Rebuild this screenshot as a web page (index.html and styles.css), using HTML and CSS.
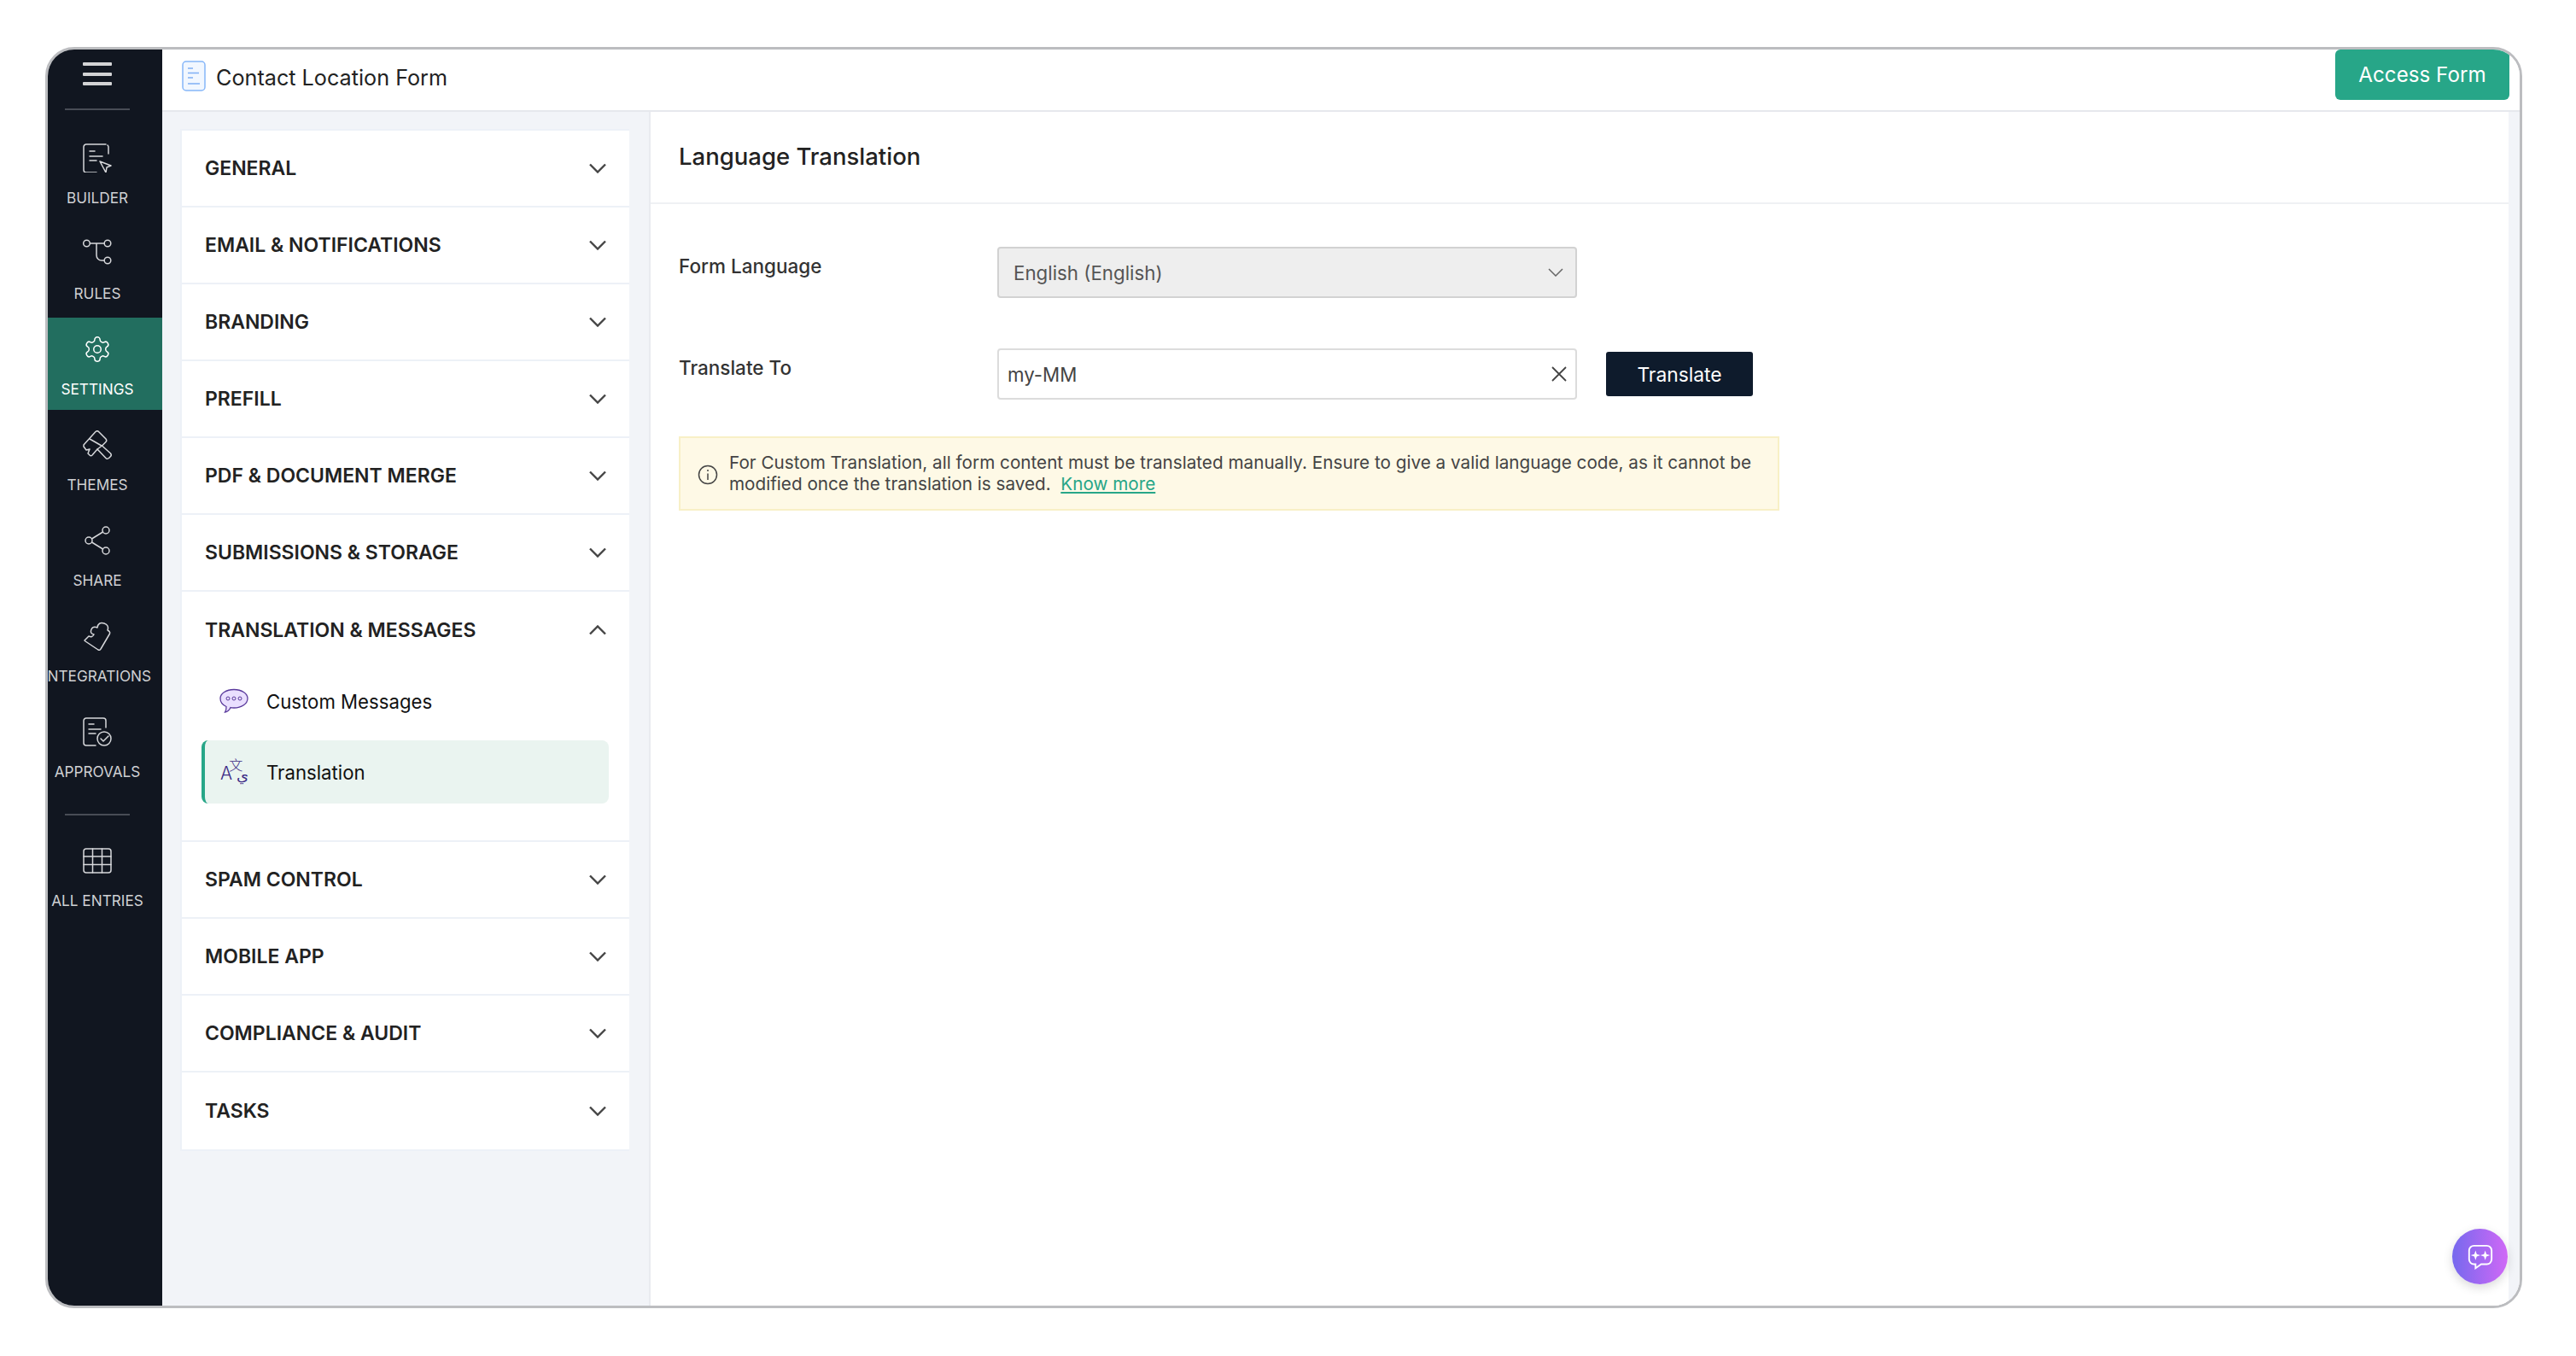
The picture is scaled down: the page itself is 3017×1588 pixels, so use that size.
FILE: index.html
```html
<!DOCTYPE html>
<html lang="en">
<head>
  <meta charset="UTF-8" />
  <title>Contact Location Form - Language Translation</title>
  <link rel="stylesheet" href="styles.css">
</head>
<body>
<div class="frame">

  <!-- left rail -->
  <nav class="rail">
    <div class="rail-top">
      <span class="burger"><i></i><i></i><i></i></span>
    </div>
    <div class="rail-line"></div>

    <a class="rail-item">
      <svg class="rail-icon" viewBox="0 0 34 34"><path d="M30 12V4a3 3 0 0 0-1-2M27 1H4a3 3 0 0 0-3 3v27a3 3 0 0 0 3 3h12"/><path d="M8 9h6M8 15h15M8 20h8"/><path d="M20 21l13 5-5 2-1 6z" /></svg>
      <span>BUILDER</span>
    </a>
    <a class="rail-item">
      <svg class="rail-icon" viewBox="0 0 34 34"><circle cx="4.5" cy="5" r="3.8"/><circle cx="29" cy="5" r="3.8"/><circle cx="29" cy="25" r="3.8"/><path d="M8.5 5h16.500M16 5v14a6 6 0 0 0 6 6h3"/></svg>
      <span>RULES</span>
    </a>
    <a class="rail-item active">
      <svg class="rail-icon" viewBox="0 0 24 24"><path class="thin" d="M12.220 2h-.44a2 2 0 0 0-2 2v.18a2 2 0 0 1-1 1.730l-.43.25a2 2 0 0 1-2 0l-.15-.08a2 2 0 0 0-2.730.73l-.22.38a2 2 0 0 0 .73 2.730l.15.1a2 2 0 0 1 1 1.720v.51a2 2 0 0 1-1 1.740l-.15.09a2 2 0 0 0-.73 2.730l.22.38a2 2 0 0 0 2.730.73l.15-.08a2 2 0 0 1 2 0l.43.25a2 2 0 0 1 1 1.730V20a2 2 0 0 0 2 2h.44a2 2 0 0 0 2-2v-.18a2 2 0 0 1 1-1.730l.43-.25a2 2 0 0 1 2 0l.15.08a2 2 0 0 0 2.730-.73l.22-.39a2 2 0 0 0-.73-2.730l-.15-.08a2 2 0 0 1-1-1.740v-.5a2 2 0 0 1 1-1.740l.15-.09a2 2 0 0 0 .73-2.730l-.22-.38a2 2 0 0 0-2.730-.73l-.15.08a2 2 0 0 1-2 0l-.43-.25a2 2 0 0 1-1-1.730V4a2 2 0 0 0-2-2z"/><circle class="thin" cx="12" cy="12" r="3"/></svg>
      <span>SETTINGS</span>
    </a>
    <a class="rail-item">
      <svg class="rail-icon" viewBox="0 0 34 34"><path d="M1 17L15 1.500q2-1.500 3.500 0L27 10q1.500 2 0 3.500L22.500 18l10 9q1.500 2 0 3.500l-2 2q-2 1.500-3.500 0L17 22l-6 7q-1.500 1.500-3 0l-2-2 2-5-4 1-3-4z"/><path d="M8 10l14 8M17 22l5.500-4"/></svg>
      <span>THEMES</span>
    </a>
    <a class="rail-item">
      <svg class="rail-icon" viewBox="0 0 34 34"><circle cx="27" cy="5" r="4"/><circle cx="7" cy="17" r="4"/><circle cx="27" cy="29" r="4"/><path d="M10.500 15l13-8M10.500 19l13 8"/></svg>
      <span>SHARE</span>
    </a>
    <a class="rail-item">
      <svg class="rail-icon" viewBox="0 0 34 34"><path d="M3 23L18 33q2 1 3-1l10-17q2-3-2-5 2-6-4-8-7-2-8 5-5-2-7 2-2 5 3 6-2 4-6 2-3 3-5 5z"/></svg>
      <span>INTEGRATIONS</span>
    </a>
    <a class="rail-item">
      <svg class="rail-icon" viewBox="0 0 34 34"><path d="M27 12V4a3 3 0 0 0-3-3H4a3 3 0 0 0-3 3v26a3 3 0 0 0 3 3h11"/><path d="M7 8h6M7 14h14M7 19h8"/><circle cx="25" cy="25" r="8"/><path d="M21 25l3 3 6-6"/></svg>
      <span>APPROVALS</span>
    </a>

    <div class="rail-line rail-line-2"></div>

    <a class="rail-item entries">
      <svg class="rail-icon" viewBox="0 0 34 30"><rect x="1" y="1" width="32" height="28" rx="3"/><path d="M1 10h32M1 19.500h32M11.500 1v28M22.500 1v28"/></svg>
      <span>ALL ENTRIES</span>
    </a>
  </nav>

  <div class="workspace">
    <header class="topbar">
      <svg class="form-icon" viewBox="0 0 28 36"><rect x="1" y="1" width="26" height="34" rx="4" fill="#f1f7ff" stroke="#85b6f9" stroke-width="1.500"/><path d="M7 9h6M7 14.500h13M7 20h6M7 27h14" stroke="#7fb0f5" stroke-width="1.500" fill="none"/></svg>
      <span class="form-name">Contact Location Form</span>
      <button class="access-btn">Access Form</button>
    </header>

    <div class="panels">
      <aside class="settings-col">
        <div class="accordion">
          <div class="acc-row"><span>GENERAL</span><svg class="chev" viewBox="0 0 20 12"><path d="M1 1.500l9 9 9-9"/></svg></div>
          <div class="acc-row"><span>EMAIL &amp; NOTIFICATIONS</span><svg class="chev" viewBox="0 0 20 12"><path d="M1 1.500l9 9 9-9"/></svg></div>
          <div class="acc-row"><span>BRANDING</span><svg class="chev" viewBox="0 0 20 12"><path d="M1 1.500l9 9 9-9"/></svg></div>
          <div class="acc-row"><span>PREFILL</span><svg class="chev" viewBox="0 0 20 12"><path d="M1 1.500l9 9 9-9"/></svg></div>
          <div class="acc-row"><span>PDF &amp; DOCUMENT MERGE</span><svg class="chev" viewBox="0 0 20 12"><path d="M1 1.500l9 9 9-9"/></svg></div>
          <div class="acc-row"><span>SUBMISSIONS &amp; STORAGE</span><svg class="chev" viewBox="0 0 20 12"><path d="M1 1.500l9 9 9-9"/></svg></div>

          <div class="acc-group">
            <div class="acc-row open"><span>TRANSLATION &amp; MESSAGES</span><svg class="chev" viewBox="0 0 20 12"><path d="M1 10.500l9-9 9 9"/></svg></div>
            <div class="sub-list">
              <a class="sub-item">
                <svg class="sub-icon" viewBox="0 0 34 30"><path d="M17 1.500c9 0 16 4.500 16 10.500s-7 11-16 11c-1.500 0-3-.1-4-.4-1 2.400-3.500 5-6.500 5.400 1.200-1.800 1.700-4 1.500-6.500C3.500 19.500 1 16 1 12 1 6 8 1.500 17 1.500z" fill="#eadfff" stroke="#5a3a9c" stroke-width="1.300"/><circle cx="10" cy="12" r="2" fill="none" stroke="#5a3a9c"/><circle cx="17" cy="12" r="2" fill="none" stroke="#5a3a9c"/><circle cx="24" cy="12" r="2" fill="none" stroke="#5a3a9c"/></svg>
                <span>Custom Messages</span>
              </a>
              <a class="sub-item current">
                <svg class="sub-icon tr" viewBox="0 0 38 42"><text x="1" y="27" class="tr-a">A</text><text x="12" y="16" class="tr-b">文</text><text x="21" y="28" class="tr-c">ي</text></svg>
                <span>Translation</span>
              </a>
            </div>
          </div>

          <div class="acc-row"><span>SPAM CONTROL</span><svg class="chev" viewBox="0 0 20 12"><path d="M1 1.500l9 9 9-9"/></svg></div>
          <div class="acc-row"><span>MOBILE APP</span><svg class="chev" viewBox="0 0 20 12"><path d="M1 1.500l9 9 9-9"/></svg></div>
          <div class="acc-row"><span>COMPLIANCE &amp; AUDIT</span><svg class="chev" viewBox="0 0 20 12"><path d="M1 1.500l9 9 9-9"/></svg></div>
          <div class="acc-row last"><span>TASKS</span><svg class="chev" viewBox="0 0 20 12"><path d="M1 1.500l9 9 9-9"/></svg></div>
        </div>
      </aside>

      <main class="content">
        <h1 class="content-title">Language Translation</h1>
        <div class="content-body">
          <div class="field">
            <label>Form Language</label>
            <div class="select-box">
              <span>English (English)</span>
              <svg class="select-chev" viewBox="0 0 18 10"><path d="M1 1l8 8 8-8"/></svg>
            </div>
          </div>
          <div class="field field-2">
            <label>Translate To</label>
            <div class="input-box">
              <span>my-MM</span>
              <svg class="clear-x" viewBox="0 0 18 18"><path d="M1 1l16 16M17 1L1 17"/></svg>
            </div>
            <button class="translate-btn">Translate</button>
          </div>
          <div class="notice">
            <svg class="notice-icon" viewBox="0 0 24 24"><circle cx="12" cy="12" r="10.500"/><path d="M12 10.500V18M12 6v2"/></svg>
            <p>For Custom Translation, all form content must be translated manually. Ensure to give a valid language code, as it cannot be modified once the translation is saved.&nbsp; <a>Know more</a></p>
          </div>
        </div>
      </main>
      <div class="edge-strip"></div>
    </div>
  </div>

  <button class="chat-fab">
    <svg viewBox="0 0 34 34"><path d="M9 3h16a6 6 0 0 1 6 6v11a6 6 0 0 1-6 6h-7l-7 5v-5H9a6 6 0 0 1-6-6V9a6 6 0 0 1 6-6z" fill="none" stroke="#fff" stroke-width="2"/><path d="M11 9l1.500 4.500L17 15l-4.500 1.500L11 21l-1.500-4.500L5 15l4.500-1.500zM23 9l1.500 4.500L29 15l-4.500 1.500L23 21l-1.500-4.500L17 15l4.500-1.500z" fill="#fff"/></svg>
  </button>
</div>
</body>
</html>
```

FILE: styles.css
```css
* {
  box-sizing: border-box;
}

html, body {
  margin: 0;
  height: 100%;
  background: #fff;
}

body {
  font-family: "Inter", "Liberation Sans", sans-serif;
  padding: 55px 0 0 53px;
  overflow: hidden;
}

.frame {
  position: relative;
  display: flex;
  width: 2901px;
  height: 1477px;
  border: 3.5px solid #bcbdc0;
  border-radius: 34px;
  overflow: hidden;
  background: #fff;
}

/* left rail */
.rail {
  width: 134px;
  flex-shrink: 0;
  background: #111620;
  display: flex;
  flex-direction: column;
}

.rail-top {
  height: 69px;
  width: 116px;
  display: flex;
  justify-content: center;
  padding-top: 15px;
  flex-shrink: 0;
}

.burger {
  display: flex;
  flex-direction: column;
  gap: 7.500px;
  width: 34px;
}

.burger i {
  display: block;
  height: 4px;
  background: #d3d3d5;
  border-radius: 1px;
}

.rail-line {
  width: 76px;
  height: 2px;
  margin-left: 20px;
  background: #484c55;
  flex-shrink: 0;
}

.rail-line-2 {
  margin-top: 25px;
}

.rail-item {
  width: 134px;
  height: 108px;
  margin-top: 4px;
  padding: 20px 18px 0 0;
  flex-shrink: 0;
  display: flex;
  flex-direction: column;
  align-items: center;
  color: #cfd0d3;
  font-size: 17.200px;
  white-space: nowrap;
}

.rail-line + .rail-item {
  margin-top: 19px;
}

.rail-item.entries {
  margin-top: 16px;
}

.rail-item.active {
  background: #226e5f;
  color: #fff;
}

.rail-item span {
  margin-top: 19px;
  line-height: 22px;
}

.rail-icon {
  width: 34px;
  height: 34px;
  fill: none;
  stroke: #d6d7da;
  stroke-width: 1.500;
  stroke-linecap: round;
  stroke-linejoin: round;
  flex-shrink: 0;
}

.rail-icon .thin {
  stroke-width: 1.050;
}

.rail-item.active .rail-icon {
  stroke: #fff;
}

.workspace {
  flex: 1;
  min-width: 0;
  display: flex;
  flex-direction: column;
}

/* top bar */
.topbar {
  height: 73px;
  flex-shrink: 0;
  display: flex;
  align-items: flex-start;
  padding: 0 12px 0 23px;
  border-bottom: 2px solid #e6e8ed;
  background: #fff;
}

.form-icon {
  width: 28px;
  height: 36px;
  margin-top: 13px;
}

.form-name {
  margin: 17px 0 0 12px;
  font-size: 25.200px;
  line-height: 32px;
  color: #222;
}

.access-btn {
  margin-left: auto;
  width: 204px;
  height: 59px;
  background: #27a688;
  color: #fff;
  border: none;
  border-radius: 0 0 6px 6px;
  border-top-left-radius: 6px;
  font-family: inherit;
  font-size: 24.200px;
}

.panels {
  flex: 1;
  display: flex;
  min-height: 0;
  background: #f2f4f8;
}

/* settings accordion */
.settings-col {
  width: 572px;
  flex-shrink: 0;
  padding: 20px 23px 0 21px;
  border-right: 2px solid #e9ebf0;
}

.accordion {
  background: #fff;
  border: 2px solid #edf1f7;
  border-right-width: 0;
}

.acc-row {
  height: 90px;
  padding: 0 27px 0 27px;
  display: flex;
  align-items: center;
  justify-content: space-between;
  border-bottom: 2px solid #edf1f7;
  font-size: 23px;
  font-weight: 600;
  color: #222;
}

.acc-row.open,
.acc-row.last {
  border-bottom: none;
}

.chev {
  width: 20px;
  height: 12px;
  fill: none;
  stroke: #444;
  stroke-width: 2.400;
}

.acc-group {
  border-bottom: 2px solid #edf1f7;
}

.sub-list {
  padding: 1px 24px 0 23px;
  height: 201px;
}

.sub-item {
  height: 74px;
  display: flex;
  align-items: center;
  padding-left: 21px;
  font-size: 22.200px;
  color: #111;
  border-radius: 8px;
}

.sub-item.current {
  margin-top: 9px;
  padding-left: 17px;
  background: #eaf4f0;
  border-left: 4px solid #27a688;
}

.sub-icon {
  width: 34px;
  height: 30px;
  flex-shrink: 0;
  margin-right: 21px;
}

.sub-icon.tr {
  width: 36px;
  height: 40px;
  margin: 6px 19px 0 0;
  overflow: visible;
}

.tr-a {
  font-size: 22px;
  font-weight: 300;
  fill: #3c2a85;
}

.tr-b {
  font-family: "Noto Sans CJK SC", sans-serif;
  font-size: 17px;
  font-weight: 300;
  fill: #3c2a85;
}

.tr-c {
  font-family: "DejaVu Sans", sans-serif;
  font-size: 19px;
  fill: #3c2a85;
}

/* main content */
.content {
  flex: 1;
  min-width: 0;
  background: #fff;
}

.content-title {
  margin: 0;
  height: 108px;
  padding: 36px 0 0 33px;
  font-size: 27.500px;
  line-height: 32px;
  font-weight: 500;
  color: #222;
  border-bottom: 2px solid #eff1f4;
}

.content-body {
  padding: 50px 0 0 33px;
}

.field {
  display: flex;
  align-items: flex-start;
}

.field-2 {
  margin-top: 59px;
}

.field label {
  width: 373px;
  padding-top: 9px;
  font-size: 22.500px;
  line-height: 28px;
  font-weight: 500;
  color: #333;
}

.select-box,
.input-box {
  width: 679px;
  height: 60px;
  border: 2px solid #d2d2d2;
  border-radius: 4px;
  display: flex;
  align-items: center;
  justify-content: space-between;
  font-size: 22.300px;
}

.select-box {
  background: #eeeeee;
  padding: 0 14px 0 17px;
  color: #555;
}

.input-box {
  background: #fff;
  border-color: #dcdcdc;
  padding: 0 10px 0 10px;
  color: #444;
}

.select-chev {
  width: 18px;
  height: 10px;
  fill: none;
  stroke: #666;
  stroke-width: 1.500;
}

.clear-x {
  width: 18px;
  height: 18px;
  fill: none;
  stroke: #444;
  stroke-width: 1.800;
}

.translate-btn {
  margin: 4px 0 0 34px;
  width: 172px;
  height: 52px;
  background: #0e1b2c;
  color: #fff;
  border: none;
  border-radius: 3px;
  font-family: inherit;
  font-size: 22.800px;
}

.notice {
  margin-top: 43px;
  width: 1289px;
  height: 87px;
  padding: 16px 10px 0 20px;
  display: flex;
  background: #fef9e6;
  border: 2px solid #f8f0c6;
  color: #444;
  font-size: 20.700px;
  line-height: 25px;
}

.notice-icon {
  width: 24px;
  height: 24px;
  margin: 15px 13px 0 0;
  flex-shrink: 0;
  fill: none;
  stroke: #444;
  stroke-width: 1.500;
}

.notice p {
  margin: 0;
}

.notice a {
  color: #27a688;
  text-decoration: underline;
}

.edge-strip {
  width: 13px;
  flex-shrink: 0;
}

/* floating chat button */
.chat-fab {
  position: absolute;
  right: 14px;
  bottom: 25px;
  width: 65px;
  height: 65px;
  padding: 0;
  border: none;
  border-radius: 50%;
  background: linear-gradient(90deg, #7669ee, #d068f6);
  box-shadow: 0 4px 12px rgba(0, 0, 0, 0.15);
  display: flex;
  align-items: center;
  justify-content: center;
}

.chat-fab svg {
  width: 32px;
  height: 32px;
}
```
